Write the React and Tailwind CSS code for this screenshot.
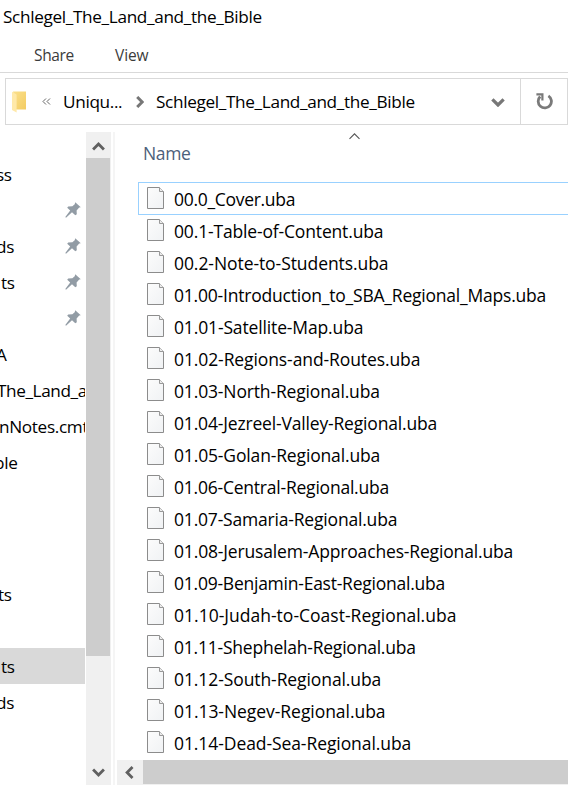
import React from 'react';

const files = [
  ['00.0_Cover.uba', 'tracking-[-0.30px]'],
  ['00.1-Table-of-Content.uba', 'tracking-[-0.16px]'],
  ['00.2-Note-to-Students.uba', 'tracking-[-0.07px]'],
  ['01.00-Introduction_to_SBA_Regional_Maps.uba', 'tracking-[-0.21px]'],
  ['01.01-Satellite-Map.uba', 'tracking-[-0.14px]'],
  ['01.02-Regions-and-Routes.uba', 'tracking-[-0.10px]'],
  ['01.03-North-Regional.uba', 'tracking-[-0.15px]'],
  ['01.04-Jezreel-Valley-Regional.uba', 'tracking-[-0.17px]'],
  ['01.05-Golan-Regional.uba', 'tracking-[-0.15px]'],
  ['01.06-Central-Regional.uba', 'tracking-[-0.22px]'],
  ['01.07-Samaria-Regional.uba', 'tracking-[-0.19px]'],
  ['01.08-Jerusalem-Approaches-Regional.uba', 'tracking-[-0.16px]'],
  ['01.09-Benjamin-East-Regional.uba', 'tracking-[-0.24px]'],
  ['01.10-Judah-to-Coast-Regional.uba', 'tracking-[0.01px]'],
  ['01.11-Shephelah-Regional.uba', 'tracking-[-0.22px]'],
  ['01.12-South-Regional.uba', 'tracking-[-0.09px]'],
  ['01.13-Negev-Regional.uba', 'tracking-[-0.05px]'],
  ['01.14-Dead-Sea-Regional.uba', 'tracking-[-0.08px]'],
];

const sidebar = [
  { text: 'ss', indent: '-ml-[4px]' },
  { text: '', pin: true },
  { text: 'ds', indent: '-ml-[4px]', pin: true },
  { text: 'ts', indent: 'pl-px', pin: true },
  { text: '', pin: true },
  { text: 'A', indent: '-ml-[4px]' },
  { text: 'The_Land_a', indent: '-ml-[3px] tracking-[-0.4px]' },
  { text: 'nNotes.cmt', indent: '-ml-[1px]' },
  { text: 'ble', indent: '-ml-[6px]' },
];

const lower = [
  { text: 'ts', indent: '-ml-[2px] mt-[2px]' },
  { text: '' },
  { text: 'ts', indent: 'pl-px mt-[2px]', selected: true },
  { text: 'ds', indent: '-ml-[4px] mt-[2px]' },
];

function Pin() {
  return (
    <svg className="mb-[2px] mr-[4px] h-4 w-4 shrink-0" viewBox="0 0 16 16" fill="#929ca5">
      <path d="M10.2 0.2 L15.8 5.2 L14.2 5.6 L11.6 8.4 L11.8 12.2 L10.3 13.2 L7 10.2 L1 15.8 L0.3 15.1 L5.2 8.6 L2.2 5.8 L3.2 4.4 L7.4 4.3 L9.7 2.2 Z" />
    </svg>
  );
}

function FileIcon() {
  return (
    <svg className="mb-[2px] h-[22px] w-[17px] shrink-0" viewBox="0 0 17 22">
      <defs>
        <linearGradient id="page" x1="0" y1="0" x2="1" y2="1">
          <stop offset="0" stopColor="#fcfcfc" />
          <stop offset="1" stopColor="#f0f2f4" />
        </linearGradient>
      </defs>
      <path d="M0.5 0.5 H12.5 L16.5 4.5 V21.5 H0.5 Z" fill="url(#page)" stroke="#8c8c8c" />
      <path d="M12.5 0.5 V4.5 H16.5" fill="#ececec" stroke="#999" />
    </svg>
  );
}

function Chevron({ className, width, color }) {
  return (
    <svg className={className} viewBox="0 0 12 8" fill="none" stroke={color} strokeWidth={width}>
      <path d="M1 1.2 L6 6.2 L11 1.2" />
    </svg>
  );
}

function SideItem({ item }) {
  return (
    <div className={'flex h-9 items-center justify-between overflow-hidden ' + (item.selected ? 'bg-[#d9d9d9]' : '')}>
      <span className={'whitespace-nowrap ' + (item.indent || '')}>{item.text}</span>
      {item.pin && <Pin />}
    </div>
  );
}

export default function App() {
  return (
    <div className="flex h-[799px] w-[568px] flex-col overflow-hidden bg-white font-['Open_Sans',sans-serif] text-[17.2px] leading-6 tracking-[-0.34px] text-black">
      <div className="h-[36px] pl-[3px] pt-[5px]">Schlegel_The_Land_and_the_Bible</div>
      <div className="flex h-[37px] border-b border-[#d9d9d9] pl-[34px] pt-[7px] text-[15.5px] text-[#3b3b3b]">
        <span className="w-[81px]">Share</span>
        <span className="tracking-[-0.1px]">View</span>
      </div>
      <div className="ml-[5px] mt-[5px] flex h-[47px] items-center border border-[#d9d9d9]">
        <svg className="ml-[6px] h-[22px] w-[15px]" viewBox="0 0 15 22">
          <defs>
            <linearGradient id="folder" x1="0" y1="0" x2="1" y2="1">
              <stop offset="0" stopColor="#fbe08c" />
              <stop offset="1" stopColor="#f3cc62" />
            </linearGradient>
          </defs>
          <path d="M1 0.5 H14 V18.5 H4 Z" fill="url(#folder)" />
          <path d="M0 0.8 L4.6 3.6 V21.5 L0 19 Z" fill="#ffe9a9" />
        </svg>
        <svg className="ml-[15px] h-[7px] w-[9px]" viewBox="0 0 9 7" fill="none" stroke="#666">
          <path d="M4 0.5 L1 3.5 L4 6.5 M8 0.5 L5 3.5 L8 6.5" />
        </svg>
        <span className="ml-[12px] w-[71px]">Uniqu...</span>
        <Chevron className="mt-px h-[8px] w-[12px] -rotate-90" width={3} color="#777" />
        <span className="ml-[10px] flex-1 whitespace-nowrap">Schlegel_The_Land_and_the_Bible</span>
        <Chevron className="mr-[15px] mt-px h-[9px] w-[14px]" width={2.9} color="#777" />
        <div className="flex h-full w-[47px] items-center justify-center border-l border-[#d9d9d9]">
          <svg className="h-[17px] w-[17px]" viewBox="0 0 17 17" fill="none" stroke="#7a7a7a" strokeWidth="2.8">
            <path d="M12.4 2.8 A6.6 6.6 0 1 1 4.2 3.6" />
            <path d="M0.4 1.4 H6.4 V7.6" strokeWidth="2.2" />
          </svg>
        </div>
      </div>
      <div className="mt-[7px] flex h-[653px]">
        <div className="flex w-[85px] shrink-0 flex-col overflow-hidden pt-[25px]">
          {sidebar.map((item, i) => <SideItem key={i} item={item} />)}
          <div className="h-[95px]" />
          {lower.map((item, i) => <SideItem key={i} item={item} />)}
        </div>
        <div className="ml-px flex w-[25px] shrink-0 flex-col bg-[#f0f0f0]">
          <div className="flex h-[26px] items-center justify-center">
            <Chevron className="mt-[3px] h-[9px] w-[13px] rotate-180" width={2.6} color="#606060" />
          </div>
          <div className="h-[498px] w-6 bg-[#cdcdcd]" />
          <div className="flex flex-1 items-end justify-center pb-[8px]">
            <Chevron className="h-[9px] w-[13px]" width={2.6} color="#606060" />
          </div>
        </div>
        <div className="ml-[2px] w-[2px] shrink-0 bg-[#f5f5f5]" />
        <div className="ml-[2px] flex min-w-0 flex-1 flex-col">
          <div className="flex h-[50px]">
            <span className="ml-[26px] mt-[9px] w-[205px] text-[17.5px] text-[#4c607a]">Name</span>
            <Chevron className="h-[8px] w-[13px] rotate-180" width={1.1} color="#555" />
          </div>
          <div className="flex h-[578px] flex-col">
            {files.map(([name, tracking], i) => (
              <div
                key={name}
                className={
                  'ml-[21px] flex shrink-0 items-center border-l pl-[8px] ' +
                  (i === 0 ? 'h-[33px] border-y border-[#99d1ff]' : 'h-8 border-transparent')
                }
              >
                <FileIcon />
                <span className={'ml-[10px] whitespace-nowrap text-[17.5px] ' + tracking}>{name}</span>
              </div>
            ))}
          </div>
          <div className="flex h-[25px] bg-[#f0f0f0]">
            <div className="flex w-[26px] items-center justify-center">
              <Chevron className="mr-px h-[9px] w-[13px] rotate-90" width={2.6} color="#606060" />
            </div>
            <div className="h-6 flex-1 bg-[#cdcdcd]" />
          </div>
        </div>
      </div>
    </div>
  );
}
